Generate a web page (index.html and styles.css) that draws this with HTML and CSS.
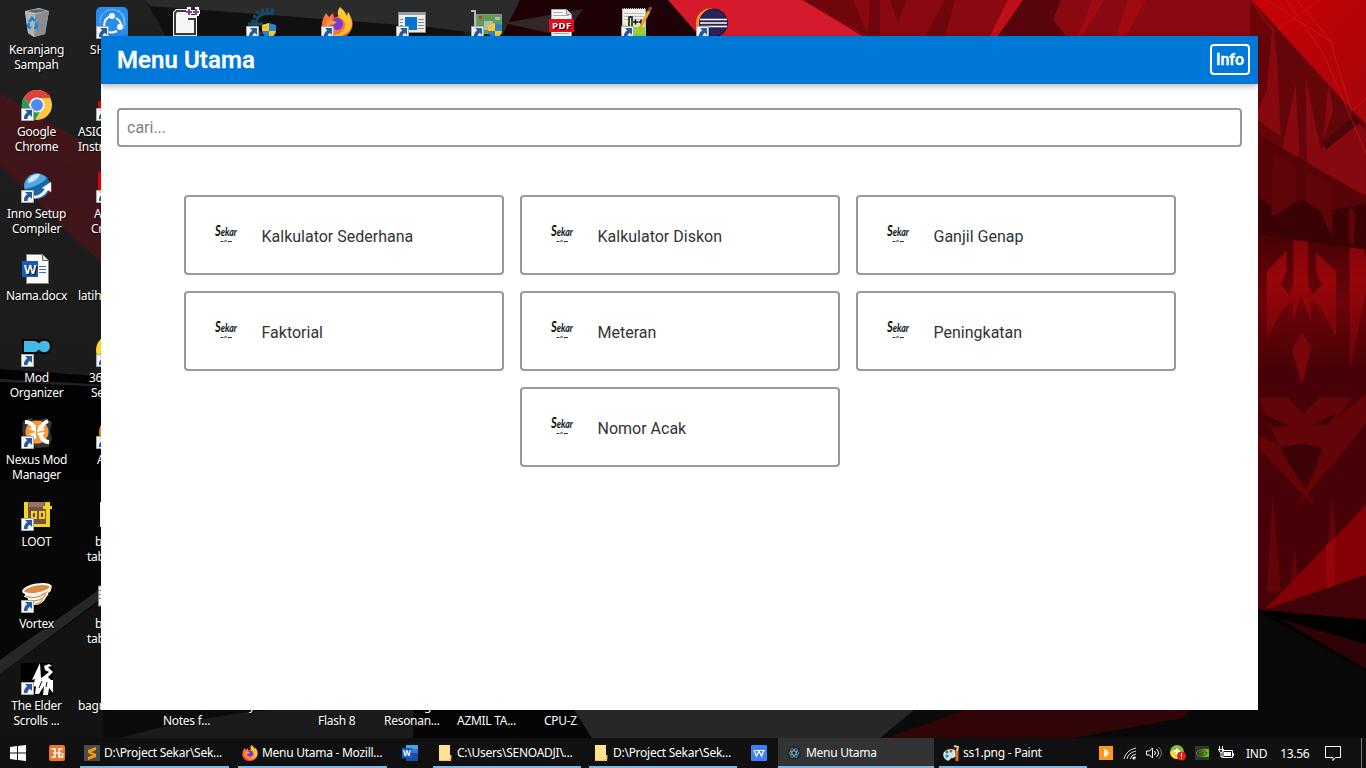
FILE: index.html
```html
<!DOCTYPE html>
<html lang="id">
<head>
<meta charset="utf-8">
<title>Menu Utama</title>
<link rel="stylesheet" href="styles.css">
</head>
<body>
<svg class="wallpaper" viewBox="0 0 1366 768" aria-hidden="true">
  <defs>
    <linearGradient id="dark" x1="0" y1="0" x2="0" y2="1"><stop offset="0" stop-color="#202020"/><stop offset=".5" stop-color="#1b1b1b"/><stop offset="1" stop-color="#101010"/></linearGradient>
    <linearGradient id="flare" x1="0" y1="0" x2="0" y2="1"><stop offset="0" stop-color="#480206"/><stop offset=".3" stop-color="#6d0308"/><stop offset=".6" stop-color="#480206"/></linearGradient>
    <linearGradient id="crest" x1="0" y1="0" x2="0" y2="1"><stop offset="0" stop-color="#6c0408"/><stop offset=".45" stop-color="#980609"/><stop offset="1" stop-color="#650408"/></linearGradient>
    <linearGradient id="shard" x1="0" y1="0" x2="1" y2="1"><stop offset="0" stop-color="#c90005"/><stop offset="1" stop-color="#a5060a"/></linearGradient>
  </defs>
  <path fill="url(#dark)" d="M0 0h1366v768H0z"/>
  <path fill="#3f1519" d="M0 93L110 158V270L76 240 0 165z"/>
  <path fill="#4a171c" d="M0 93L110 158V184L30 145z" opacity=".3"/>
  <path fill="#020202" d="M0 369l110 8v350H0z"/>
  <path fill="#222" d="M0 379l110 6v2L0 382z"/>
  <path fill="#070707" d="M0 480h110v120L0 672z"/>
  <path fill="#131313" d="M0 674l110-80v150H0z"/>
  <path fill="#272727" d="M0 660l110-78v10L0 674z"/>
  <path fill="#101010" d="M145 0h330l-12 36H166z"/>
  <path fill="#2b2b2b" d="M145 0h375l-17 36-75-9L150 6z"/>
  <path fill="#1d0306" d="M520 0h150l38 40H500z"/>
  <path fill="#342529" d="M503 23l80-14-20 27z"/>
  <path fill="#d51b2b" d="M668 0h135l66 40H703z"/>
  <path fill="#8a080f" d="M803 0h563v160h-110V40H869z"/>
  <path fill="#6e060b" d="M803 0h50l15 36zM870 0h10v36h-12zM890 0h16l-8 24zM925 36l20-36h10l-10 36z"/>
  <path fill="#be1019" d="M990 36l18-36h15l-25 36z"/>
  <path fill="#57050a" d="M998 36l25-36h38l-8 20 13 16z"/>
  <path fill="#a00b11" d="M1078 36l14-36h12l-22 36zM1128 0h18l-20 36h-10z"/>
  <path fill="#6c0409" d="M1250 0l116 165V750h-116z"/>
  <g transform="translate(1250 80) scale(.3333 .4209)">
    <path fill="url(#flare)" d="M20 370l328 30v500H20z"/>
    <path fill="#480207" d="M20 700h328v585H20z"/>
    <path fill="url(#crest)" d="M50 615V455l60-50v50l-18 30 25 25 13-25v-130h44v130l14 25 28-25-18-30v-45l60 45v155l-50-75-25-10v45l-30-60-25 60v-45l-30 20zM298 300l50 120v80l-48 190z"/>
    <path fill="#760609" d="M155 600l30 35-30 90-30-85z"/>
    <path fill="#620408" d="M25 755h90l45 40 45-40h100l-45 50 88-60v70l-80 80-130 120 60-90 15-55H92l65 90 40 55L25 875v-30l60 20zM50 1215l18-230 25 230zM235 1100l10-115 18 140zM115 1215l20-100 12 100z"/>
    <path fill="#3c0206" d="M92 880q65-30 125 0l-60 80zM25 790l90 30-40 5zM190 820l70-30-30 30z"/>
    <path fill="#010101" d="M20 1258l328 24v290H20z"/>
    <path fill="#840007" d="M45 1258l303-248v165z"/>
    <path fill="#960409" d="M228 1105l30-20-5 115-23 10z"/>
    <path fill="#400308" d="M45 1258l303-80v104z"/>
    <path fill="#2d0307" d="M90 1280l258 60v60z"/>
    <path fill="#080808" d="M20 1260l328 145v165H20z"/>
  </g>
  <g transform="translate(1140 0) scale(.3333)">
    <path fill="#64050a" d="M335 0l343 370v220L350 400V100h60z"/>
    <path fill="#870910" d="M380 270l18-200 14 110 10 230-68-50v-30zM425 460l42-210 12 200-10 35zM497 230l45 220 100-90 36 30v195l-178-82zM565 250l15 80-30 90z"/>
    <path fill="#490509" d="M550 430l90-85 22 20-105 85z"/>
    <path fill="#560408" d="M350 400l328 190v158L350 705z"/>
    <path fill="#3b0206" d="M350 590l50 30 90-20 90 30 98-20v138L350 705z"/>
    <path fill="#5f0509" d="M400 460l68 35v110l-60 40h-13V520zM497 508l80 42v160l-38-80-42-25zM627 620l20 20-5 90h-15z"/>
    <path fill="url(#shard)" d="M335 0h343v370l-38-35z"/>
    <path fill="none" stroke="#d91f1c" stroke-width="3" opacity=".6" d="M440 0l110 160 128 300M540 0l-130 90M470 0l100 120 65 215M640 330l38-35M380 0l200 130"/>
  </g>
  <path fill="#0b0b0b" d="M103 710h1155v28H103z"/>
  <path fill="#1b1b1b" d="M120 738q80-22 150-28h150l-6 28z"/>
  <path fill="#040404" d="M414 710h160l18 28H413z"/>
  <path fill="#272727" d="M574 710h340l-34 28H592z"/>
  <path fill="#310408" d="M966 710h224l-6 8-110 20H886z"/>
  <path fill="#08080b" d="M1190 710h176v28h-292l110-20z"/>
</svg>

<svg class="defs" aria-hidden="true">
  <symbol id="arrow" viewBox="0 0 13 13"><path fill="#f8f8f8" stroke="#aaa" d="M.5.5h12v12H.5z"/><path fill="#285b9e" d="M4 2h7v7L8.800 6.800Q6 8.500 6.500 11H3Q2.300 7.500 6.200 4.300z"/></symbol>
  <symbol id="firefox" viewBox="0 0 32 32"><path fill="#ff7139" d="M5 6l3 4 4-4 1 5 5-2L19 0q5 4 7 9l1-4q8 12 2 20c-7 10-22 9-27-1C-1 18 2 11 5 6z"/><path fill="#ffc32e" d="M19 0q5 4 7 9l1-4q8 14-1 21-8 6-15 2 13-1 13-10 0-5-6-8-3-5 1-10z"/><path fill="#ee2d63" d="M2 16q2 12 14 14 7 0 12-6-6 11-17 7Q2 27 2 16z"/><circle cx="16" cy="17" r="6" fill="#753bd7"/><path fill="#ff9d32" d="M6 13q6 0 10 2l-4 3-4-1q1 6 8 6-8 3-11-4z"/></symbol>
  <symbol id="shield" viewBox="0 0 14 16"><path fill="#2685d2" d="M7 0l7 2v5q0 6-7 9-7-3-7-9V2z"/><path fill="#ffc62c" d="M7 0L0 2v6h7zM7 8h7q-1 5-7 8z"/></symbol>
  <symbol id="word" viewBox="0 0 16 16"><path fill="#41a5ee" d="M4 0h12v5H4z"/><path fill="#2b7cd3" d="M4 4h12v4H4z"/><path fill="#174ea8" d="M4 8h12v8H4z"/><path fill="#185abd" d="M0 3h10v10H0z"/><text x="1" y="11" font-family="Open Sans" font-size="8" font-weight="700" fill="#fff">W</text></symbol>
  <symbol id="folder" viewBox="0 0 14 16"><path fill="#ffe38e" d="M1 0h11v11h1v5H1z"/><path fill="#e9bd49" d="M12 10h1.500v4l-3 2H1v-.700h9l2-2z"/></symbol>
  <symbol id="sekar" viewBox="0 0 28 22"><text x="3" y="12.500" fill="#111" font-family="Lato" font-style="italic" font-weight="700" font-size="12" textLength="22" lengthAdjust="spacingAndGlyphs"><tspan font-size="15">S</tspan>ekar</text><path stroke="#333" fill="none" stroke-width="1" d="M8.500 18.500h3m.5-.5h3m1 .5h4"/></symbol>
</svg>

<main class="desktop">
  <div class="item c1 r1"><svg viewBox="0 0 32 32"><path fill="#c6c9ca" d="M4 4l14-3 10 3-4 23-11 3-6-4z"/><path fill="#898d8f" d="M14 7l14-3-4 23-11 3z"/><path fill="#b1b5b7" d="M4 4l10 3-1 23-6-4z"/><path fill="#626667" d="M5 4l13-2 8 2-12 2z"/><path fill="none" stroke="#1683d9" stroke-width="2.500" d="M8 15l3-4 3 3m1 2l1 4-3 1m-3 0l-3-1 1-4"/></svg><p>Keranjang<br>Sampah</p></div>
  <div class="item c1 r2"><svg viewBox="0 0 32 32"><circle cx="16" cy="16" r="15" fill="#fbc943"/><path fill="#1f9e59" d="M3 8a15 15 0 0 0 11 23l7-12-12-1z"/><path fill="#dc4638" d="M3 8Q8 1 16 1q10 0 14 8H16q-6 0-8 7z"/><circle cx="16" cy="16" r="7.500" fill="#fff"/><circle cx="16" cy="16" r="6" fill="#4c8bf5"/><use href="#arrow" y="19" width="13" height="13"/></svg><p>Google<br>Chrome</p></div>
  <div class="item c1 r3"><svg viewBox="0 0 32 32"><circle cx="16" cy="15" r="13" fill="#1668a7"/><path fill="#4da9df" d="M5 9Q14-3 26 7q-7 8-22 11-2-4 1-9z"/><path fill="#c5e9f8" d="M7 9q4-7 12-6-3 8-12 9z"/><path fill="#fff" stroke="#ccc" stroke-width=".5" d="M10 25q9 1 14-7l-3-1 9-6v10l-3-2q-6 10-17 8z"/><use href="#arrow" y="19" width="13" height="13"/></svg><p>Inno Setup<br>Compiler</p></div>
  <div class="item c1 r4"><svg viewBox="0 0 32 32"><path fill="#fff" stroke="#858585" d="M5.500 1.500h16l6 6v23h-22z"/><path fill="#ddd" stroke="#666" d="M21.500 1.500v6h6"/><path fill="#185abd" d="M1 8h16v16H1z"/><text x="3" y="20.500" font-family="Open Sans" font-size="13" font-weight="700" fill="#fff" textLength="12" lengthAdjust="spacingAndGlyphs">W</text><path stroke="#2e75bf" d="M18 13.500h7m-7 3h7m-7 3h7"/></svg><p>Nama.docx</p></div>
  <div class="item c1 r5"><svg viewBox="0 0 32 32"><path fill="#41b9e9" stroke="#070707" stroke-width="2" d="M2 5h11q3 0 5 2 3-3 7-2c6 1 7 11 0 13q-4 1-7-2-3 3-7 2H2z"/><use href="#arrow" y="19" width="13" height="13"/></svg><p>Mod<br>Organizer</p></div>
  <div class="item c1 r6"><svg viewBox="0 0 32 32"><path fill="#353535" d="M2 4l7-3 7 3 9-3 6 4-2 9 2 8-3 8-12 1-12-4L1 14z"/><circle cx="16" cy="15" r="11.500" fill="#f59a35"/><path fill="none" stroke="#fff" stroke-width="4" d="M4 5q7 0 9 6M27 4q-5 2-7 7M28 25q-6 0-8-6M6 26q5-2 7-7"/><path fill="#fff" d="M8 12l7-4v7zM18 8l6 5-8 2zM16 16l8-1-4 7zM8 17l7-2v7z"/><use href="#arrow" y="19" width="13" height="13"/></svg><p>Nexus Mod<br>Manager</p></div>
  <div class="item c1 r7"><svg viewBox="0 0 32 32"><path fill="#735348" d="M4 3h25v25H4z"/><path fill="#977265" d="M8 3h15v5H8z"/><path fill="#f2d31d" d="M3 3h4v17H3zm21 0h5v4h2v3h-2v15h-4V10h-3V7h2zM10 12h6v8h-6zm8 0h6v8h-6zM13 25h16v3H13z"/><path fill="#604238" d="M12 14h2v4h-2zm8 0h2v4h-2z"/><use href="#arrow" y="19" width="13" height="13"/></svg><p>LOOT</p></div>
  <div class="item c1 r8"><svg viewBox="0 0 32 32"><path fill="none" stroke="#fff" stroke-width="4" d="M4 14q12 6 25-6M7 18q12 4 19-6M13 22q7 0 10-6"/><path fill="none" stroke="#d78b45" stroke-width="1.300" d="M5 15q11 5 23-6M9 19q10 3 16-6M14 23q5 0 8-5"/><ellipse cx="16" cy="8" rx="14" ry="4.500" transform="rotate(-10 16 8)" fill="#d78b45" stroke="#fff" stroke-width="2"/><use href="#arrow" y="19" width="13" height="13"/></svg><p>Vortex</p></div>
  <div class="item c1 r9"><svg viewBox="0 0 32 32"><path fill="#000" d="M0 0h32v32H0z"/><path fill="#fff" d="M19 0l1 15 3-2 5-4-4-2-1-4 5-2 3 2-4 1 5 5-5 5 3 3h2v13l-4-5-1 7h-5l1-9-5 8h-4l1-8-3 1 2-8-3 1z"/><path stroke="#111" d="M21 18l-3 7M26 19l-1 5"/><use href="#arrow" y="19" width="13" height="13"/></svg><p>The Elder<br>Scrolls ...</p></div>

  <div class="item c2 r1"><svg viewBox="0 0 32 32"><rect width="32" height="32" rx="5" fill="#268df1"/><path fill="none" stroke="#85c0fa" d="M4 16a12 12 0 0 1 24-3v9M22 3q8 5 7 15"/><path fill="none" stroke="#fff" stroke-width="2" d="M8 20q0-10 8-11m4 2q6 4 5 9M11 24q4 3 10 0"/><circle cx="16" cy="9" r="3" fill="#fff"/><circle cx="24" cy="20" r="3" fill="#fff"/><use href="#arrow" y="19" width="13" height="13"/></svg><p>SHAREit</p></div>
  <div class="item c2 r2"><svg viewBox="0 0 32 32"><path fill="#e00000" d="M2 12h6v10H2z"/><use href="#arrow" y="19" width="13" height="13"/></svg><p class="part wide">ASICS<br>Instru</p></div>
  <div class="item c2 r3"><svg viewBox="0 0 32 32"><path fill="#e00000" d="M2 1h6v20H2z"/><use href="#arrow" y="19" width="13" height="13"/></svg><p class="part mid"><span class="nudge">A</span><br>Cr</p></div>
  <div class="item c2 r4"><p class="part wide lone">latiha</p></div>
  <div class="item c2 r5"><svg viewBox="0 0 32 32"><circle cx="15" cy="15" r="15" fill="#ffd82f"/><use href="#arrow" y="19" width="13" height="13"/></svg><p class="part near">360<br><span class="nudge2">Se</span></p></div>
  <div class="item c2 r6"><svg viewBox="0 0 32 32"><circle cx="18" cy="15" r="15" fill="#e78a17"/><use href="#arrow" y="19" width="13" height="13"/></svg><p class="part far">A</p></div>
  <div class="item c2 r7"><svg viewBox="0 0 32 32"><path fill="#eee" d="M4 3h6v25H4z"/></svg><p class="part tabs"><span>b</span><br>tab</p></div>
  <div class="item c2 r8"><svg viewBox="0 0 32 32"><path fill="#eee" stroke="#888" d="M2.500 5h7v20h-7z"/><path stroke="#888" d="M3 9.500h6m-6 4h6m-6 4h6"/></svg><p class="part tabs"><span>b</span><br>tab</p></div>
  <div class="item c2 r9"><p class="part wide lone">bagus</p></div>

  <div class="item c3 r1"><svg viewBox="0 0 32 32"><path fill="#f5f5f5" d="M5 2h12v6h9v25H2V5z"/><path fill="#f5f5f5" stroke="#3a3a3a" stroke-width="2" d="M16 4H6L4 6v21h20V12h-7"/><path fill="none" stroke="#fff" stroke-width="4" d="M15 5h14M18 0v9m8-9v9"/><path fill="none" stroke="#81418d" stroke-width="2" d="M15 5h6m-3-3v6m4-3h6m-3-3v6"/></svg></div>
  <div class="item c4 r1"><svg viewBox="0 0 32 32"><path fill="none" stroke="#174a67" stroke-width="4" stroke-dasharray="3 2" d="M28 4Q10 0 7 15q-1 9 9 13"/><path fill="none" stroke="#174a67" stroke-width="3" d="M28 7Q13 4 10 15q0 8 5 13M2 17h15"/><use href="#shield" x="16" y="16" width="14" height="16"/><use href="#arrow" y="19" width="13" height="13"/></svg></div>
  <div class="item c5 r1"><svg viewBox="0 0 32 32"><use href="#firefox" width="32" height="32"/><use href="#arrow" y="19" width="13" height="13"/></svg></div>
  <div class="item c6 r1"><svg viewBox="0 0 32 32"><path fill="#eee" stroke="#8c8c8c" d="M2.500 5.500h27v20h-27z"/><path fill="#989ea2" d="M3 5h26v3H3z"/><path fill="#0674cd" d="M9 10h12v13H9z"/><path stroke="#888" d="M4 12.500h3m-3 3h3m-3 3h3m15-6h6m-6 3h6m-6 3h6m-6 3h6"/><use href="#arrow" y="19" width="13" height="13"/></svg></div>
  <div class="item c7 r1"><svg viewBox="0 0 32 32"><path fill="none" stroke="#b9b9b9" stroke-width="2" d="M0 4h4v24"/><path fill="#5f9a5c" stroke="#72a66c" d="M5.500 7.500h25v19h-25z"/><path fill="#a9c1a6" d="M13 14h9v9h-9zM24 10h5v3h-5z"/><path fill="#c33" d="M8 9h3v3H8z"/><use href="#shield" x="17" y="16" width="14" height="16"/><use href="#arrow" y="19" width="13" height="13"/></svg></div>
  <div class="item c8 r1"><svg viewBox="0 0 32 32"><path fill="#fafafa" stroke="#aaa" d="M5.500 2.500h15l5 5v24h-20z"/><path fill="#ddd" stroke="#999" d="M20.500 2.500v5h5"/><path stroke="#aaa" d="M7 5.500h10m-10 3h16m-16 18h16"/><path fill="#e60d1c" d="M3 12h25v13H3z"/><text x="6" y="22" fill="#fff" font-family="Open Sans" font-weight="700" font-size="9.500" textLength="19">PDF</text></svg></div>
  <div class="item c9 r1"><svg viewBox="0 0 32 32"><path fill="#eee" stroke="#bbb" d="M1.500 1.500h23v29h-23z"/><path fill="#91d338" d="M2 20h22v11H2z"/><path fill="#d8efb0" d="M2 16h22v4H2z"/><path stroke="#bbb" d="M3 6.500h20m-20 3h20m-20 3h20"/><path stroke="#222" stroke-dasharray="1 1" d="M2 1.500h23"/><path fill="none" stroke="#111" stroke-width="1.500" d="M8 20V10h3v10m1-5h5m-2.500-2.500v5m3-2.500h5m-2.500-2.500v5"/><path stroke="#e8a52b" stroke-width="3" d="M28 4L18 23"/><path stroke="#914b48" stroke-width="3" d="M30 0l-2 4"/><use href="#arrow" y="19" width="13" height="13"/></svg></div>
  <div class="item c10 r1"><svg viewBox="0 0 32 32"><circle cx="14.500" cy="16" r="14.500" fill="#f9932e"/><circle cx="17.500" cy="16" r="14" fill="#29235a" stroke="#160c2e"/><path stroke="#fff" stroke-width="1.500" d="M4 12.500h27M4 16h27M4 19.500h27"/><use href="#arrow" y="19" width="13" height="13"/></svg></div>
  <p class="bottom-label b3">Notes f...</p><p class="bottom-label b4">y</p><p class="bottom-label b5">Flash 8</p><p class="bottom-label b6a">g</p><p class="bottom-label b6">Resonan...</p><p class="bottom-label b7">AZMIL TA...</p><p class="bottom-label b8">CPU-Z</p>
</main>

<section class="window">
  <header><h1>Menu Utama</h1><button class="info">Info</button></header>
  <div class="content">
    <input type="text" placeholder="cari...">
    <div class="menu">
      <a class="card"><svg><use href="#sekar"/></svg><span>Kalkulator Sederhana</span></a>
      <a class="card"><svg><use href="#sekar"/></svg><span>Kalkulator Diskon</span></a>
      <a class="card"><svg><use href="#sekar"/></svg><span>Ganjil Genap</span></a>
      <a class="card"><svg><use href="#sekar"/></svg><span>Faktorial</span></a>
      <a class="card"><svg><use href="#sekar"/></svg><span>Meteran</span></a>
      <a class="card"><svg><use href="#sekar"/></svg><span>Peningkatan</span></a>
      <a class="card"><svg><use href="#sekar"/></svg><span>Nomor Acak</span></a>
    </div>
  </div>
</section>

<footer class="taskbar">
  <div class="slot start"><svg viewBox="0 0 16 16"><path fill="#fff" d="M0 2l7-1v6.500H0zM8 1l8-1v7.500H8zM0 8.500h7V15l-7-1zm8 0h8V16l-8-1z"/></svg></div>
  <div class="slot xampp"><svg viewBox="0 0 16 16"><rect width="16" height="16" rx="2" fill="#f37623"/><path fill="none" stroke="#fff" stroke-width="1.600" d="M2.500 4H6v8H2.500M4 8h8M13.500 4H10v8h3.500V8"/></svg></div>
  <div class="task t1"><svg viewBox="0 0 16 16"><path fill="#4b4b4b" d="M0 0h16v16H0z"/><path fill="#ff9800" d="M12 2v3L7 7l5 2v3l-8 3v-3l5-2-5-2V5z"/></svg><span>D:\Project Sekar\Sek...</span></div>
  <div class="task t2"><svg><use href="#firefox"/></svg><span>Menu Utama - Mozill...</span></div>
  <div class="slot wordslot"><svg><use href="#word"/></svg></div>
  <div class="task t3"><svg><use href="#folder"/></svg><span>C:\Users\SENOADJI\...</span></div>
  <div class="task t4"><svg><use href="#folder"/></svg><span>D:\Project Sekar\Sek...</span></div>
  <div class="slot wps"><svg viewBox="0 0 16 16"><rect width="16" height="16" rx="1" fill="#417ff9"/><path fill="none" stroke="#fff" stroke-width="1.200" d="M3 5.500h10L10.500 11 8 6l-2.500 5L3 5.500"/></svg></div>
  <div class="task active"><svg viewBox="0 0 16 16"><circle cx="8" cy="8" r="7" fill="#202a37"/><g fill="none" stroke="#79a6b5" stroke-width=".8"><ellipse cx="8" cy="8" rx="5" ry="2"/><ellipse cx="8" cy="8" rx="5" ry="2" transform="rotate(60 8 8)"/><ellipse cx="8" cy="8" rx="5" ry="2" transform="rotate(120 8 8)"/></g></svg><span>Menu Utama</span></div>
  <div class="task paint"><svg viewBox="0 0 16 16"><path fill="#c9e7f4" d="M1 7q5-5 11-2l1 6q-3 3-5 2-2 5-6 1-3-3-1-7z"/><circle cx="4" cy="7" r="1.500" fill="#408843"/><circle cx="8" cy="6" r="1.500" fill="#e23935"/><circle cx="4" cy="11" r="1.500" fill="#3175c0"/><path stroke="#d97518" stroke-width="3" d="M14 5v11"/><path stroke="#f4cd86" stroke-width="2" d="M11 1l4 1-1 4"/></svg><span>ss1.png - Paint</span></div>
  <div class="tray">
    <svg viewBox="0 0 16 16"><path fill="#ff981d" d="M1 1h14v14H1z"/><path fill="#fff4dd" d="M6 4l3 1 2 3-2 3-3 1z"/></svg>
    <svg viewBox="0 0 16 16"><g fill="none" stroke="#ddd"><path d="M2 14Q4 5 14 3M5 14q1-6 9-8M8 14q1-4 6-5M11 14q0-2 3-2"/></g><circle cx="12" cy="13" r="1.500" fill="#fff"/></svg>
    <svg viewBox="0 0 16 16"><g fill="none" stroke="#fff"><path d="M.5 6h3l3-3v10l-3-3h-3zM8.500 6q2 2 0 4M10.500 4q4 4 0 8"/><path stroke="#777" d="M12.500 2q6 6 0 12"/></g></svg>
    <svg viewBox="0 0 16 16"><circle cx="7" cy="7" r="7" fill="#7fbd2e"/><path fill="#f8d849" d="M0 7q5-5 14 0-2 7-7 7-6 0-7-7z"/><path stroke="#fff" stroke-width="2" d="M7 3v6M4 6h6"/><circle cx="11.500" cy="11" r="4.500" fill="#e62117"/><path stroke="#fff" d="M11.500 8v4m0 1v1"/></svg>
    <svg viewBox="0 0 16 16"><path fill="#303638" d="M1 1h14v14H1z"/><path fill="#76b900" d="M7 4h8v8H7z"/><path fill="none" stroke="#5c8f14" d="M2 8q2-3 5-3M2 8q2 3 5 3M5 8l2-1"/><path fill="none" stroke="#142b0b" d="M7 5q4 0 6 3-2 3-6 3m0-4q2 0 3 1-1 1-3 1"/></svg>
    <svg viewBox="0 0 16 16"><path stroke="#fff" fill="none" d="M1.500 1v3m3-3v3M0 4.500h6m-5 0q0 3 2 3t2-3M3 7v5h2m0-6.500h9.500v7H5z"/><path fill="#fff" d="M6 7h7v4H6zm9 1h1v3h-1z"/></svg>
  </div>
  <span class="language">IND</span><span class="clock">13.56</span>
  <div class="slot notice"><svg viewBox="0 0 16 16"><path fill="none" stroke="#fff" d="M.5 1.500h15v11h-5L8 15.500V12.500H.5z"/></svg></div>
  <i class="show-desktop"></i>
</footer>
</body>
</html>
```

FILE: styles.css
```css
* { box-sizing: border-box; }
body { margin: 0; width: 1366px; height: 768px; overflow: hidden; position: relative; background: #111; font-family: Roboto, sans-serif; }
p, h1 { margin: 0; }
.wallpaper { position: absolute; inset: 0; width: 1366px; height: 768px; }
.defs { position: absolute; width: 0; height: 0; }

.desktop { position: absolute; inset: 0; display: grid; grid-template-columns: repeat(10, 75px); grid-template-rows: repeat(9, 82px); color: #fff; font: 12px/15px "Noto Sans", sans-serif; letter-spacing: -.28px; text-shadow: 1px 1px 1px #000; overflow: hidden; }
.item { padding-top: 7px; width: 75px; min-width: 0; text-align: center; white-space: nowrap; }
.item > svg { display: block; width: 32px; height: 32px; margin-left: 21px; }
.item p { margin-top: 3px; width: 73px; }
.c1 { grid-column: 1; } .c2 { grid-column: 2; } .c3 { grid-column: 3; } .c4 { grid-column: 4; } .c5 { grid-column: 5; }
.c6 { grid-column: 6; } .c7 { grid-column: 7; } .c8 { grid-column: 8; } .c9 { grid-column: 9; } .c10 { grid-column: 10; }
.r1 { grid-row: 1; } .r2 { grid-row: 2; } .r3 { grid-row: 3; } .r4 { grid-row: 4; } .r5 { grid-row: 5; }
.r6 { grid-row: 6; } .r7 { grid-row: 7; } .r8 { grid-row: 8; } .r9 { grid-row: 9; }
.item .part { text-align: left; }
.item .wide { padding-left: 3px; }
.item .mid { padding-left: 16px; }
.item .near { padding-left: 14px; }
.item .far { padding-left: 22px; }
.item .tabs { padding-left: 12px; }
.tabs span { padding-left: 8px; }
.nudge { padding-left: 3px; }
.nudge2 { padding-left: 2px; }
.item .lone { margin-top: 35px; }
.bottom-label { position: absolute; top: 713px; }
.b3 { left: 163px; } .b4 { left: 249px; top: 698px; } .b5 { left: 318px; } .b6 { left: 384px; } .b6a { left: 424px; top: 698px; } .b7 { left: 457px; } .b8 { left: 544px; }

.window { position: absolute; left: 101px; top: 36px; width: 1157px; height: 674px; background: #fff; }
.window header { height: 48px; padding: 0 8px 0 16px; display: flex; align-items: center; justify-content: space-between; background: #0078d7; color: #fff; box-shadow: 0 2px 6px rgba(0,0,0,.3); }
h1 { font-size: 24px; line-height: 28px; font-weight: 500; letter-spacing: .1px; -webkit-text-stroke: .4px #fff; }
.info { width: 40px; height: 31px; margin-bottom: 2px; border: 2px solid #fff; border-radius: 4px; padding: 1px 0 0; background: transparent; color: #fff; font: 500 16px/20px Roboto, sans-serif; -webkit-text-stroke: .4px #fff; }
.content { padding: 24px 16px; }
input { display: block; width: 100%; height: 39px; padding: 0 8px; border: 2px solid #999; border-radius: 4px; font: 16px Roboto, sans-serif; background: #fff; }
input::placeholder { color: #808080; opacity: 1; }
.menu { margin-top: 48px; display: flex; flex-wrap: wrap; justify-content: center; gap: 16px; padding: 0 60px; }
.card { width: 320px; height: 80px; border: 2px solid #999; border-radius: 4px; padding: 2px 26px 0; display: flex; align-items: center; color: #333; font-size: 16px; }
.card svg { width: 28px; height: 22px; margin: 0 22px 4px 0; }

.taskbar { position: absolute; left: 0; top: 738px; width: 1366px; height: 30px; display: flex; background: #101010; color: #fff; font: 12px/31px "Noto Sans", sans-serif; letter-spacing: -.27px; white-space: nowrap; }
.taskbar svg { width: 16px; height: 16px; flex-shrink: 0; }
.slot { display: flex; align-items: center; justify-content: center; flex-shrink: 0; }
.start { width: 36px; } .xampp { width: 42px; margin-right: 2px; }
.task { flex: none; width: 149px; display: flex; align-items: center; gap: 4px; padding-left: 4px; border-bottom: 2px solid #76b9ed; overflow: hidden; }
.task svg { margin-top: 1px; }
.task span { line-height: 28px; padding-top: 2px; }
.t1 { margin-right: 9px; }
.t2 { width: 149px; }
.wordslot { width: 46px; }
.t3, .t4 { width: 148px; }
.t3 { margin-right: 8px; }
.wps { width: 43px; margin-right: -2px; }
.active { width: 156px; padding-left: 8px; background: #333; margin-right: 5px; }
.paint { width: 148px; }
.tray { display: flex; align-items: center; gap: 8px; margin-left: 11px; }
.language { margin-left: 12px; } .clock { margin-left: 13px; }
.notice { margin-left: auto; margin-right: 20px; }
.show-desktop { width: 1px; background: #777; margin-right: 4px; }
```
